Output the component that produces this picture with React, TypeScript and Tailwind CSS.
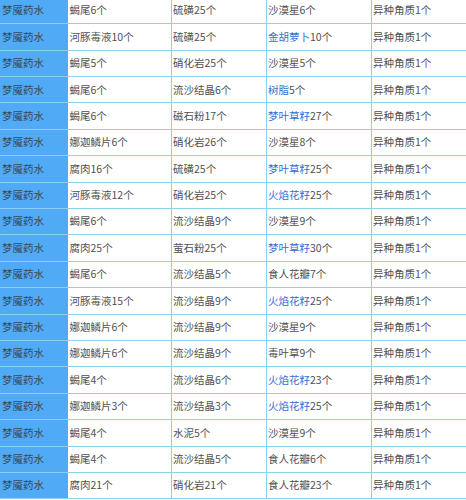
import React from "react";

type Cell = { link?: string; text: string };
const rows: [string, string, Cell, string][] = [
  ["蝎尾6个", "硫磺25个", { text: "沙漠星6个" }, "异种角质1个"],
  ["河豚毒液10个", "硫磺25个", { link: "金胡萝卜", text: "10个" }, "异种角质1个"],
  ["蝎尾5个", "硝化岩25个", { text: "沙漠星5个" }, "异种角质1个"],
  ["蝎尾6个", "流沙结晶6个", { link: "树脂", text: "5个" }, "异种角质1个"],
  ["蝎尾6个", "磁石粉17个", { link: "梦叶草籽", text: "27个" }, "异种角质1个"],
  ["娜迦鳞片6个", "硝化岩26个", { text: "沙漠星8个" }, "异种角质1个"],
  ["腐肉16个", "硫磺25个", { link: "梦叶草籽", text: "25个" }, "异种角质1个"],
  ["河豚毒液12个", "硝化岩25个", { link: "火焰花籽", text: "25个" }, "异种角质1个"],
  ["蝎尾6个", "流沙结晶9个", { text: "沙漠星9个" }, "异种角质1个"],
  ["腐肉25个", "萤石粉25个", { link: "梦叶草籽", text: "30个" }, "异种角质1个"],
  ["蝎尾6个", "流沙结晶5个", { text: "食人花瓣7个" }, "异种角质1个"],
  ["河豚毒液15个", "流沙结晶9个", { link: "火焰花籽", text: "25个" }, "异种角质1个"],
  ["娜迦鳞片6个", "流沙结晶9个", { text: "沙漠星9个" }, "异种角质1个"],
  ["娜迦鳞片6个", "流沙结晶9个", { text: "毒叶草9个" }, "异种角质1个"],
  ["蝎尾4个", "流沙结晶6个", { link: "火焰花籽", text: "23个" }, "异种角质1个"],
  ["娜迦鳞片3个", "流沙结晶3个", { link: "火焰花籽", text: "25个" }, "异种角质1个"],
  ["蝎尾4个", "水泥5个", { text: "沙漠星9个" }, "异种角质1个"],
  ["蝎尾4个", "流沙结晶5个", { text: "食人花瓣6个" }, "异种角质1个"],
  ["腐肉21个", "硝化岩21个", { text: "食人花瓣23个" }, "异种角质1个"],
];

export default function App() {
  return (
    <div
      className="w-[466px] h-[500px] overflow-hidden bg-white text-[#505050] text-[10.5px] leading-none"
      style={{ fontFamily: '"Noto Sans CJK SC", "Noto Sans", sans-serif' }}
    >
      <div className="mt-[-2.1px]">
        {rows.map((r, i) => (
          <div key={i} className="flex h-[26.4px]">
            <div className="w-[68px] shrink-0 flex items-center pl-[2px] bg-[#50aaf5] border-b border-[#8fcdf5] text-[#3a4a5a]">
              梦魇药水
            </div>
            <div className="w-[103.5px] shrink-0 flex items-center pl-[1.5px] border-b border-r border-[#8ad2ea]">
              {r[0]}
            </div>
            <div className="w-[95px] shrink-0 flex items-center pl-[1.5px] border-b border-r border-[#8ad2ea]">
              {r[1]}
            </div>
            <div className="w-[105px] shrink-0 flex items-center pl-[1.5px] border-b border-r border-[#8ad2ea]">
              {r[2].link && <span className="text-[#3570d6]">{r[2].link}</span>}
              {r[2].text}
            </div>
            <div className="flex-1 flex items-center pl-[1.5px] border-b border-[#8ad2ea]">
              {r[3]}
            </div>
          </div>
        ))}
      </div>
    </div>
  );
}
